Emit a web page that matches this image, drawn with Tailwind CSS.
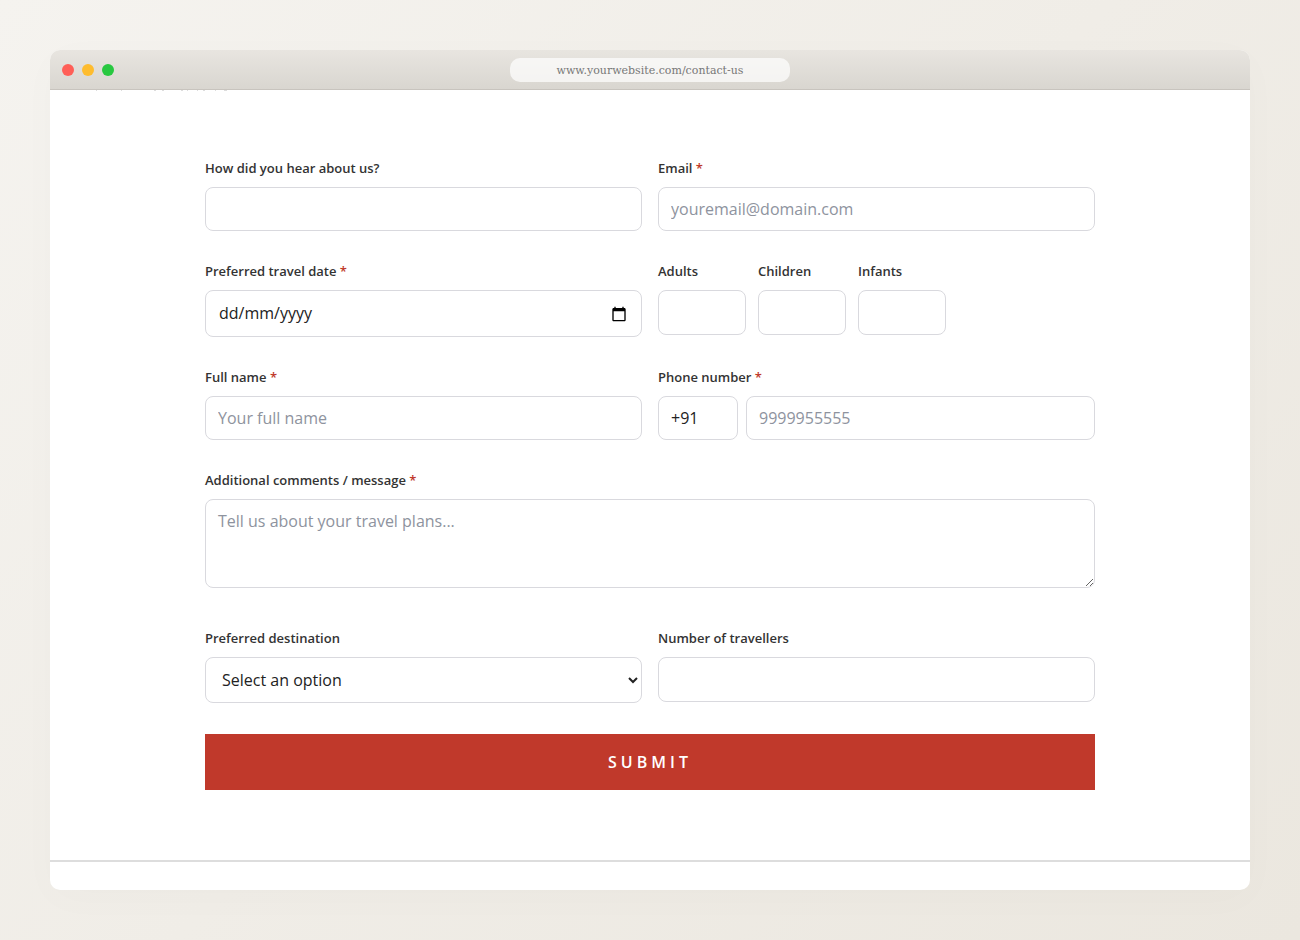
<!DOCTYPE html>
<html lang="en-GB">
<head>
<meta charset="utf-8">
<meta name="viewport" content="width=device-width, initial-scale=1">
<title>Contact us</title>
<script src="https://cdn.jsdelivr.net/npm/@tailwindcss/browser@4"></script>
</head>
<body class="flex min-h-screen flex-col bg-linear-135 from-[#f5f3ef] to-[#ebe7df] p-[50px] font-['Open_Sans',sans-serif] text-[#222]">
<main class="flex grow flex-col overflow-hidden rounded-[10px] bg-white shadow-[0_8px_40px_rgba(0,0,0,0.02)]">
  <header class="grid h-10 grid-cols-[1fr_auto_1fr] items-center border-b border-[#c8c4be] bg-linear-to-b from-[#e8e5e0] to-[#d9d6d0] px-3">
    <div class="flex gap-2">
      <span class="size-3 rounded-full bg-[#ff5f57]"></span>
      <span class="size-3 rounded-full bg-[#febc2e]"></span>
      <span class="size-3 rounded-full bg-[#28c840]"></span>
    </div>
    <div class="h-6 w-[280px] rounded-[10px] bg-white/70 text-center font-['DejaVu_Serif',serif] text-[11px] leading-[26px] text-[#777]">www.yourwebsite.com/contact-us</div>
  </header>
  <svg class="ml-11 h-px w-36 shrink-0" viewBox="0 0 144 1" fill="#ddd" aria-hidden="true"><path d="M2 0h1v1H2zM27 0h1v1h-1zM60 0h2v1h-2zM68 0h2v1h-2zM87 0h2v1h-2zM93 0h1v1h-1zM103 0h1v1h-1zM109 0h2v1h-2zM121 0h1v1h-1zM130 0h3v1h-3z"/></svg>
  <form class="mx-auto grid w-full max-w-[890px] grid-cols-2 gap-x-4 gap-y-[30px] pt-[67px] pb-[70px] text-base" onsubmit="return false">
    <div>
      <label for="hear" class="mb-2 block text-[13px] leading-[21px] font-semibold text-[#333]">How did you hear about us?</label>
      <input id="hear" class="block h-11 w-full rounded-lg border border-[#d9d9de] px-3">
    </div>
    <div>
      <label for="email" class="mb-2 block text-[13px] leading-[21px] font-semibold text-[#333]">Email <span class="text-[#c0392b]">*</span></label>
      <input id="email" type="email" placeholder="youremail@domain.com" class="block h-11 w-full rounded-lg border border-[#d9d9de] px-3 placeholder:text-[#8e939e]">
    </div>
    <div>
      <label for="date" class="mb-2 block text-[13px] leading-[21px] font-semibold text-[#333]">Preferred travel date <span class="text-[#c0392b]">*</span></label>
      <div class="flex h-[47px] items-center rounded-lg border border-[#d9d9de] pr-[14px] pl-[13px]">
        <input id="date" placeholder="dd/mm/yyyy" class="min-w-0 grow pb-px outline-none placeholder:text-[#222]">
        <button type="button" aria-label="Open calendar" class="shrink-0"><svg class="size-4" viewBox="0 0 24 24" fill="#000"><path d="M20 3h-1V1h-2v2H7V1H5v2H4c-1.1 0-2 .9-2 2v16c0 1.1.9 2 2 2h16c1.1 0 2-.9 2-2V5c0-1.1-.9-2-2-2zm0 18H4V8h16v13z"/></svg></button>
      </div>
    </div>
    <div class="flex gap-3">
      <div class="w-[88px]">
        <label for="adults" class="mb-2 block text-[13px] leading-[21px] font-semibold text-[#333]">Adults</label>
        <input id="adults" type="number" class="block h-[45px] w-full rounded-lg border border-[#d9d9de] px-3">
      </div>
      <div class="w-[88px]">
        <label for="children" class="mb-2 block text-[13px] leading-[21px] font-semibold text-[#333]">Children</label>
        <input id="children" type="number" class="block h-[45px] w-full rounded-lg border border-[#d9d9de] px-3">
      </div>
      <div class="w-[88px]">
        <label for="infants" class="mb-2 block text-[13px] leading-[21px] font-semibold text-[#333]">Infants</label>
        <input id="infants" type="number" class="block h-[45px] w-full rounded-lg border border-[#d9d9de] px-3">
      </div>
    </div>
    <div>
      <label for="name" class="mb-2 block text-[13px] leading-[21px] font-semibold text-[#333]">Full name <span class="text-[#c0392b]">*</span></label>
      <input id="name" placeholder="Your full name" class="block h-11 w-full rounded-lg border border-[#d9d9de] px-3 placeholder:text-[#8e939e]">
    </div>
    <div>
      <label for="phone" class="mb-2 block text-[13px] leading-[21px] font-semibold text-[#333]">Phone number <span class="text-[#c0392b]">*</span></label>
      <div class="flex gap-2">
        <input aria-label="Country code" value="+91" class="block h-11 w-20 rounded-lg border border-[#d9d9de] px-3">
        <input id="phone" type="tel" placeholder="9999955555" class="block h-11 min-w-0 grow rounded-lg border border-[#d9d9de] px-3 placeholder:text-[#8e939e]">
      </div>
    </div>
    <div class="col-span-2 pb-[10px]">
      <label for="message" class="mb-2 block text-[13px] leading-[21px] font-semibold text-[#333]">Additional comments / message <span class="text-[#c0392b]">*</span></label>
      <textarea id="message" placeholder="Tell us about your travel plans..." class="block h-[89px] w-full rounded-lg border border-[#d9d9de] px-3 py-[10px] leading-[22px] placeholder:text-[#8e939e]"></textarea>
    </div>
    <div>
      <label for="destination" class="mb-2 block text-[13px] leading-[21px] font-semibold text-[#333]">Preferred destination</label>
      <select id="destination" class="block h-[46px] w-full rounded-lg border border-[#d9d9de] bg-white pl-3"><option>Select an option</option></select>
    </div>
    <div>
      <label for="travellers" class="mb-2 block text-[13px] leading-[21px] font-semibold text-[#333]">Number of travellers</label>
      <input id="travellers" type="number" class="block h-[45px] w-full rounded-lg border border-[#d9d9de] px-3">
    </div>
    <button type="submit" class="col-span-2 mt-px h-14 bg-[#c0392b] font-semibold tracking-[4px] text-white">SUBMIT</button>
  </form>
  <footer class="border-t-2 border-[#ddd]"></footer>
</main>
</body>
</html>
